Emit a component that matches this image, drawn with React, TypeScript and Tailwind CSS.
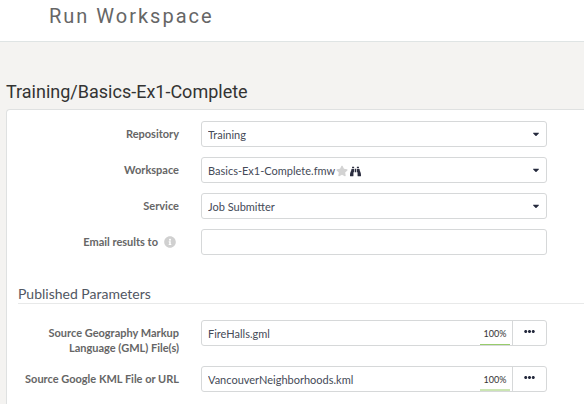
import type { ReactNode } from "react";
import { FaBinoculars, FaCaretDown, FaEllipsisH, FaInfoCircle, FaStar } from "react-icons/fa";

const fieldBox = "h-[26px] w-full rounded-[3px] border border-[#d6d8d9] bg-white text-[11px] text-[#454a57]";

function Row({ id, label, hint, children }: { id: string; label: string; hint?: ReactNode; children: ReactNode }) {
  return (
    <div className="grid grid-cols-[161px_minmax(0,1fr)] items-start gap-x-[22px] pr-[37px]">
      <div className="flex justify-end pt-[5px] text-right text-[11px] leading-[15px] font-bold text-[#666]">
        <label htmlFor={id}>{label}</label>
        {hint}
      </div>
      {children}
    </div>
  );
}

function SelectField({ id, value, icons }: { id: string; value: string; icons?: ReactNode }) {
  return (
    <div className="relative">
      <select id={id} className={`${fieldBox} block appearance-none px-[6px] pt-[2px]`}>
        <option>{value}</option>
      </select>
      {icons}
      <FaCaretDown className="pointer-events-none absolute top-2 right-[6px] size-[10px] text-[#252a3d]" />
    </div>
  );
}

function FileField({ id, value, barClass }: { id: string; value: string; barClass: string }) {
  return (
    <div className={`${fieldBox} flex overflow-hidden`}>
      <input id={id} defaultValue={value} className="min-w-0 flex-1 px-[6px] pt-[2px] outline-none" />
      <div className="mr-[2px] flex w-[30px] flex-col justify-between text-center text-[9px] text-[#333]">
        <span className="pt-[6px] leading-[14px]">100%</span>
        <span className={barClass} />
      </div>
      <button type="button" aria-label="Browse" className="flex w-[34px] items-start justify-center border-l border-[#d6d8d9] pt-[5px] text-[#252a3d]">
        <FaEllipsisH className="size-[11px]" />
      </button>
    </div>
  );
}

export default function App() {
  return (
    <div className="flex min-h-screen flex-col bg-[#f4f3f1] font-['Lato',sans-serif]">
      <header className="border-b border-[#dfe4e4] bg-white pt-[2px] pb-[11px] pl-[49px]">
        <h1 className="font-['Roboto',sans-serif] text-[20px] leading-[28px] tracking-widest text-[#666]">Run Workspace</h1>
      </header>
      <main className="flex flex-1 flex-col pt-[37px] pl-[6px]">
        <h2 className="pb-[5px] font-['Roboto',sans-serif] text-[18px] leading-[25px] text-[#333]">
          Training/Basics-Ex1-Complete
        </h2>
        <form className="flex-1 rounded-tl-[4px] border-t border-l border-[#dfe1e1] bg-white pt-[11px] pl-[11px]">
          <div className="flex flex-col gap-[10px]">
            <Row id="repository" label="Repository">
              <SelectField id="repository" value="Training" />
            </Row>
            <Row id="workspace" label="Workspace">
              <SelectField
                id="workspace"
                value="Basics-Ex1-Complete.fmw"
                icons={
                  <span className="pointer-events-none absolute top-[8px] left-[135px] flex items-center gap-[2px]">
                    <FaStar className="size-[12px] text-[#d3d3d3]" />
                    <FaBinoculars className="size-[11px] text-[#2c2e40]" />
                  </span>
                }
              />
            </Row>
            <Row id="service" label="Service">
              <SelectField id="service" value="Job Submitter" />
            </Row>
            <Row
              id="email"
              label="Email results to"
              hint={<FaInfoCircle className="mt-[2px] mr-[3px] ml-[6px] size-[12px] text-[#d0d0d0]" />}
            >
              <input id="email" type="text" className={`${fieldBox} px-[6px]`} />
            </Row>
          </div>
          <h3 className="mt-[31px] border-b border-[#e8e9e9] pb-[2px] text-[14px] leading-[15px] text-[#515763]">
            Published Parameters
          </h3>
          <div className="flex flex-col gap-[11px] pt-4">
            <Row id="gml" label="Source Geography Markup Language (GML) File(s)">
              <FileField id="gml" value="FireHalls.gml" barClass="h-px bg-[#98cc6b]" />
            </Row>
            <Row id="kml" label="Source Google KML File or URL">
              <FileField id="kml" value="VancouverNeighborhoods.kml" barClass="h-[2px] bg-[#cbe5b3]" />
            </Row>
          </div>
        </form>
      </main>
    </div>
  );
}
